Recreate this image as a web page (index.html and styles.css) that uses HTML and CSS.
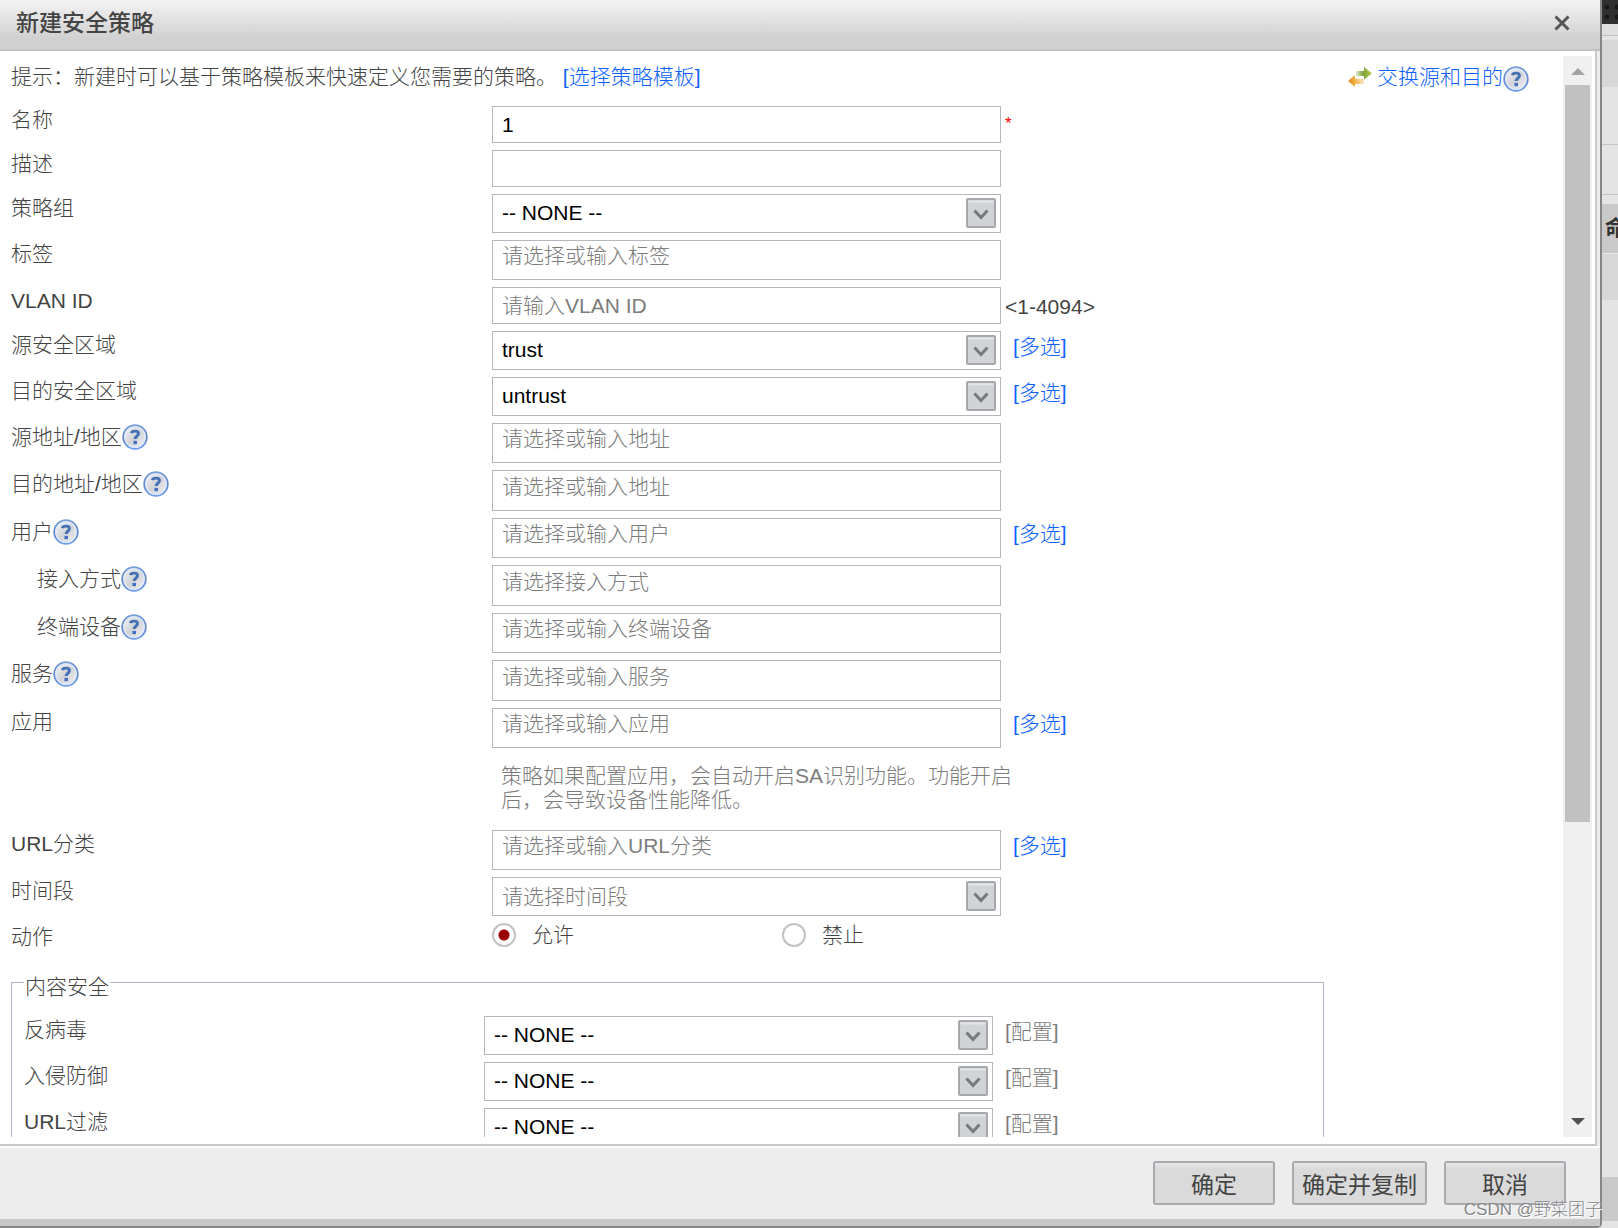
FILE: index.html
```html
<!DOCTYPE html>
<html lang="zh-CN">
<head>
<meta charset="utf-8">
<title>新建安全策略</title>
<link rel="stylesheet" href="styles.css">
</head>
<body>
<svg class="defs" width="0" height="0" aria-hidden="true">
  <defs>
    <linearGradient id="ring" x1="0" y1="0" x2="0" y2="1"><stop offset="0" stop-color="#7b9fd6"/><stop offset=".5" stop-color="#5f86c6"/><stop offset="1" stop-color="#6f9bf0"/></linearGradient>
    <linearGradient id="glass" x1="0" y1="0" x2="1" y2="1"><stop offset="0" stop-color="#fafafa"/><stop offset=".5" stop-color="#d2d3d8"/><stop offset="1" stop-color="#f6f6f8"/></linearGradient>
    <linearGradient id="green" x1="0" y1="0" x2="1" y2="0"><stop offset="0" stop-color="#e3ecd0"/><stop offset=".45" stop-color="#7f9f3c"/><stop offset="1" stop-color="#b5d34a"/></linearGradient>
    <linearGradient id="orange" x1="0" y1="0" x2="1" y2="0"><stop offset="0" stop-color="#e08a2c"/><stop offset=".4" stop-color="#f0ae3a"/><stop offset="1" stop-color="#fbe6cf"/></linearGradient>
    <symbol id="help" viewBox="0 0 25 25">
      <circle cx="12.500" cy="12.500" r="11.300" fill="url(#glass)" stroke="url(#ring)" stroke-width="1.800"/>
      <circle cx="12.500" cy="12.500" r="9.800" fill="none" stroke="#dfe9fb" stroke-width="1.200"/>
      <path d="M9 8.800C9.600 6.200 15.800 6.100 15.800 9.400c0 2.400-3.200 2.400-3.200 5.100" fill="none" stroke="#4470b4" stroke-width="2.800"/>
      <rect x="11" y="16.200" width="3.400" height="3.200" fill="#4470c0"/>
    </symbol>
    <symbol id="drop" viewBox="0 0 30 30">
      <rect x="1" y="1" width="28" height="28" rx="1" fill="#d2d3d5" stroke="#a5a8ad" stroke-width="2"/>
      <path d="M2.500 3.500h25" stroke="#e4e5e7" stroke-width="2"/>
      <path d="M8.500 12.500l6.500 7 6.500-7" fill="none" stroke="#77797d" stroke-width="3"/>
    </symbol>
  </defs>
</svg>
<main class="dialog">
  <header class="titlebar">
    <h1 class="title">新建安全策略</h1>
    <button class="close" type="button" aria-label="关闭"><svg width="16" height="16" viewBox="0 0 16 16"><path d="M1.500 1.500l13 13M14.500 1.500l-13 13" stroke="#555" stroke-width="3"/></svg></button>
  </header>
  <div class="body">
    <form class="form" id="policy">
      <div class="hint">
        <p class="hint-text">提示：新建时可以基于策略模板来快速定义您需要的策略。 <a href="#">[选择策略模板]</a></p>
        <a class="swap" href="#"><svg width="26" height="20" viewBox="0 0 26 20"><path d="M9 4h8V0l8 6.500-8 6V9H9z" fill="url(#green)"/><path d="M17 17H8v3l-7-6 7-6v4h9z" fill="url(#orange)"/></svg>交换源和目的</a>
        <svg class="help"><use href="#help"/></svg>
      </div>

      <div class="row"><label for="name">名称</label><input class="box" id="name" value="1"><span class="after"><span class="required">*</span></span></div>
      <div class="row"><label for="desc">描述</label><input class="box" id="desc"></div>
      <div class="row"><label for="group">策略组</label><span class="pick"><select class="box" id="group"><option>-- NONE --</option></select><svg class="drop"><use href="#drop"/></svg></span></div>
      <div class="row"><label for="tag">标签</label><input class="box tag" id="tag" placeholder="请选择或输入标签"></div>
      <div class="row"><label for="vlan">VLAN ID</label><input class="box" id="vlan" placeholder="请输入VLAN ID"><span class="after range">&lt;1-4094&gt;</span></div>
      <div class="row"><label for="src">源安全区域</label><span class="pick"><select class="box" id="src"><option>trust</option></select><svg class="drop"><use href="#drop"/></svg></span><a class="more" href="#">[多选]</a></div>
      <div class="row"><label for="dst">目的安全区域</label><span class="pick"><select class="box" id="dst"><option>untrust</option></select><svg class="drop"><use href="#drop"/></svg></span><a class="more" href="#">[多选]</a></div>

      <div class="objects">
        <div class="row"><label for="saddr">源地址/地区<svg class="help"><use href="#help"/></svg></label><input class="box tag" id="saddr" placeholder="请选择或输入地址"></div>
        <div class="row"><label for="daddr">目的地址/地区<svg class="help"><use href="#help"/></svg></label><input class="box tag" id="daddr" placeholder="请选择或输入地址"></div>
        <div class="row"><label for="user">用户<svg class="help"><use href="#help"/></svg></label><input class="box tag" id="user" placeholder="请选择或输入用户"><a class="more" href="#">[多选]</a></div>
        <div class="row"><label class="sub" for="access">接入方式<svg class="help"><use href="#help"/></svg></label><input class="box tag" id="access" placeholder="请选择接入方式"></div>
        <div class="row"><label class="sub" for="device">终端设备<svg class="help"><use href="#help"/></svg></label><input class="box tag" id="device" placeholder="请选择或输入终端设备"></div>
        <div class="row"><label for="service">服务<svg class="help"><use href="#help"/></svg></label><input class="box tag" id="service" placeholder="请选择或输入服务"></div>
        <div class="row"><label for="app">应用</label><input class="box tag" id="app" placeholder="请选择或输入应用"><a class="more" href="#">[多选]</a></div>
      </div>
      <div class="row"><p class="note">策略如果配置应用，会自动开启SA识别功能。功能开启后，会导致设备性能降低。</p></div>
      <div class="row"><label for="url">URL分类</label><input class="box tag" id="url" placeholder="请选择或输入URL分类"><a class="more" href="#">[多选]</a></div>
      <div class="row"><label for="time">时间段</label><span class="pick"><select class="box unset" id="time"><option>请选择时间段</option></select><svg class="drop"><use href="#drop"/></svg></span></div>
      <div class="row"><span class="label">动作</span><div class="radios"><label><input type="radio" name="action" checked>允许</label><label><input type="radio" name="action">禁止</label></div></div>

      <fieldset class="security">
        <legend>内容安全</legend>
        <div class="row"><label for="av">反病毒</label><span class="pick"><select class="box" id="av"><option>-- NONE --</option></select><svg class="drop"><use href="#drop"/></svg></span><a class="more config" href="#">[配置]</a></div>
        <div class="row"><label for="ips">入侵防御</label><span class="pick"><select class="box" id="ips"><option>-- NONE --</option></select><svg class="drop"><use href="#drop"/></svg></span><a class="more config" href="#">[配置]</a></div>
        <div class="row"><label for="uf">URL过滤</label><span class="pick"><select class="box" id="uf"><option>-- NONE --</option></select><svg class="drop"><use href="#drop"/></svg></span><a class="more config" href="#">[配置]</a></div>
      </fieldset>
    </form>
    <div class="scrollbar" aria-hidden="true">
      <svg width="14" height="7" viewBox="0 0 14 7"><path d="M0 7l7-7 7 7z" fill="#a3a3a3"/></svg>
      <div class="track"><div class="thumb"></div></div>
      <svg width="14" height="7" viewBox="0 0 14 7"><path d="M0 0l7 7 7-7z" fill="#505050"/></svg>
    </div>
  </div>
  <footer class="actions">
    <button class="btn" type="submit" form="policy">确定</button>
    <button class="btn wide" type="button">确定并复制</button>
    <button class="btn" type="button">取消</button>
  </footer>
  <div class="credit">CSDN @野菜团子</div>
</main>
<aside class="behind">
  <div class="banner"></div>
  <div class="crumb"></div>
  <div class="tabs"></div>
  <div class="tools"></div>
  <div class="tools second"></div>
  <div class="spacer"></div>
  <div class="thead">命</div>
  <div class="trow"></div>
  <div class="rest"></div>
  <div class="pager"></div>
</aside>
</body>
</html>
```

FILE: styles.css
```css
* { box-sizing: border-box; }

body {
  margin: 0;
  height: 100vh;
  display: flex;
  overflow: hidden;
  background: #e4e4e4;
  color: #444;
  font: 300 21px/24px "Liberation Sans", "Noto Sans CJK SC", sans-serif;
}

.defs { position: absolute; }
a { color: #0f62fe; text-decoration: none; }
p, h1 { margin: 0; }
input, select, button { font: inherit; }

.dialog {
  position: relative;
  flex: 1;
  min-width: 0;
  display: flex;
  flex-direction: column;
  background: #ededed;
  border: solid #868686;
  border-width: 0 2px 2px 0;
  border-radius: 0 0 5px 0;
}

.titlebar {
  flex: none;
  display: flex;
  align-items: center;
  justify-content: space-between;
  height: 51px;
  padding: 0 30px 3px 16px;
  background: linear-gradient(#f3f3f3, #d0d0d0 80%, #d0d0d0);
  border-bottom: 2px solid #c2c2c2;
}
.title { font-size: 23px; font-weight: 500; line-height: 28px; color: #444; }
.close { display: flex; padding: 0; border: 0; background: none; }

.body {
  flex: 1;
  min-height: 0;
  display: flex;
  margin-right: 3px;
  padding: 0 3px 7px 0;
  background: #fff;
  border: solid #c8c8c8;
  border-width: 0 2px 2px 0;
}
.form { flex: 1; min-width: 0; overflow: hidden; padding: 14px 0 0 11px; }

.hint { display: flex; margin: 0 34px 17px 0; height: 24px; align-items: center; }
.hint-text { flex: 1; }
.swap { display: flex; align-items: center; gap: 4px; }
.help { flex: none; width: 26px; height: 26px; }
.hint .help { margin-top: 3px; }

.row {
  display: grid;
  grid-template-columns: minmax(0, 481px) minmax(0, 509px) 1fr;
  align-items: start;
  margin-bottom: 7px;
}
.row > label, .label { display: flex; align-items: center; height: 24px; margin-top: 2px; }
.row > .sub { padding-left: 26px; }

.box {
  display: block;
  width: 100%;
  height: 37px;
  padding: 0 9px;
  border: 1px solid #b6b7bd;
  border-radius: 0;
  background: #fff;
  color: #000;
  outline: 0;
}
.box::placeholder { color: #7c7c7c; opacity: 1; }
.tag { height: 40px; padding-bottom: 8px; }
.objects .row:nth-child(even) .tag { height: 41px; }
.pick { position: relative; }
select.box { height: 39px; padding-bottom: 2px; appearance: none; }
select.unset { padding-bottom: 0; color: #7c7c7c; }
.drop { position: absolute; right: 5px; top: 4px; width: 30px; height: 30px; pointer-events: none; }

.after { padding: 4px 0 0 4px; }
.range { padding-top: 8px; }
.required { color: #f00; font-size: 17px; }
.more { padding: 4px 0 0 12px; }
.config { color: #7c7c7c; }

.note { grid-column: 2; margin: 9px -20px 11px 0; padding-left: 9px; color: #7c7c7c; }

.radios { display: grid; grid-template-columns: 290px 1fr; }
.radios label { display: flex; align-items: center; gap: 16px; }
.radios input {
  appearance: none;
  width: 24px;
  height: 24px;
  margin: 0;
  border: 2px solid #c2c2c2;
  border-radius: 50%;
  background: #fff;
}
.radios input:checked { background: radial-gradient(circle, #900 5px, #fff 6px); }

.security {
  margin: 16px 239px 0 0;
  padding: 17px 0 0 12px;
  border: 1px solid #b0b5c8;
  min-width: 0;
}
.security legend { padding: 10px 1px 0; }
.security .row { grid-template-columns: minmax(0, 460px) minmax(0, 509px) 1fr; }

.scrollbar {
  flex: none;
  width: 29px;
  margin-top: 5px;
  padding: 12px 2px;
  display: flex;
  flex-direction: column;
  align-items: center;
  gap: 10px;
  background: #f0f0f0;
}
.track { flex: 1; align-self: stretch; }
.thumb { height: 72%; background: #c1c1c1; }

.actions {
  flex: none;
  height: 80px;
  display: flex;
  justify-content: flex-end;
  gap: 17px;
  padding: 13px 34px 0 0;
  border-top: 2px solid #fafafa;
  border-bottom: 7px solid #c8c8c8;
}
.btn {
  width: 122px;
  height: 44px;
  padding: 3px 0 0;
  border: 2px solid #a9aab0;
  border-radius: 3px;
  background: linear-gradient(#e8e8e8, #dadada 6px);
  color: #444;
  font-size: 23px;
  font-weight: 400;
}
.wide { width: 135px; }

.credit {
  position: absolute;
  right: -2px;
  bottom: 4px;
  color: #85868a;
  font-size: 17px;
  text-shadow: 1px 1px 0 #fff;
  white-space: nowrap;
}

.behind { flex: none; width: 16px; display: flex; flex-direction: column; overflow: hidden; }
.behind > div { flex: none; }
.banner { height: 24px; background: radial-gradient(circle, #191919 2px, #303030 3px) 0 2px / 10px 10px; }
.crumb { height: 12px; border-bottom: 1px solid #bfbfc4; background: #dfdfdf; }
.tabs { height: 51px; border-top: 4px solid #e4e4e4; background: #d7d7d7; }
.tools { height: 58px; border-bottom: 1px solid #c3c4cc; }
.second { height: 50px; }
.spacer { height: 9px; }
.thead { height: 49px; padding: 12px 0 0 3px; overflow: hidden; white-space: nowrap; background: #c9c9c9; color: #333; font-weight: 700; }
.trow { height: 47px; border-top: 1px solid #e8e8e8; background: #d7d7d7; }
.behind > .rest { flex: 1; }
.pager { height: 51px; border-bottom: 7px solid #e4e4e4; background: #c9c9c9; }
```
